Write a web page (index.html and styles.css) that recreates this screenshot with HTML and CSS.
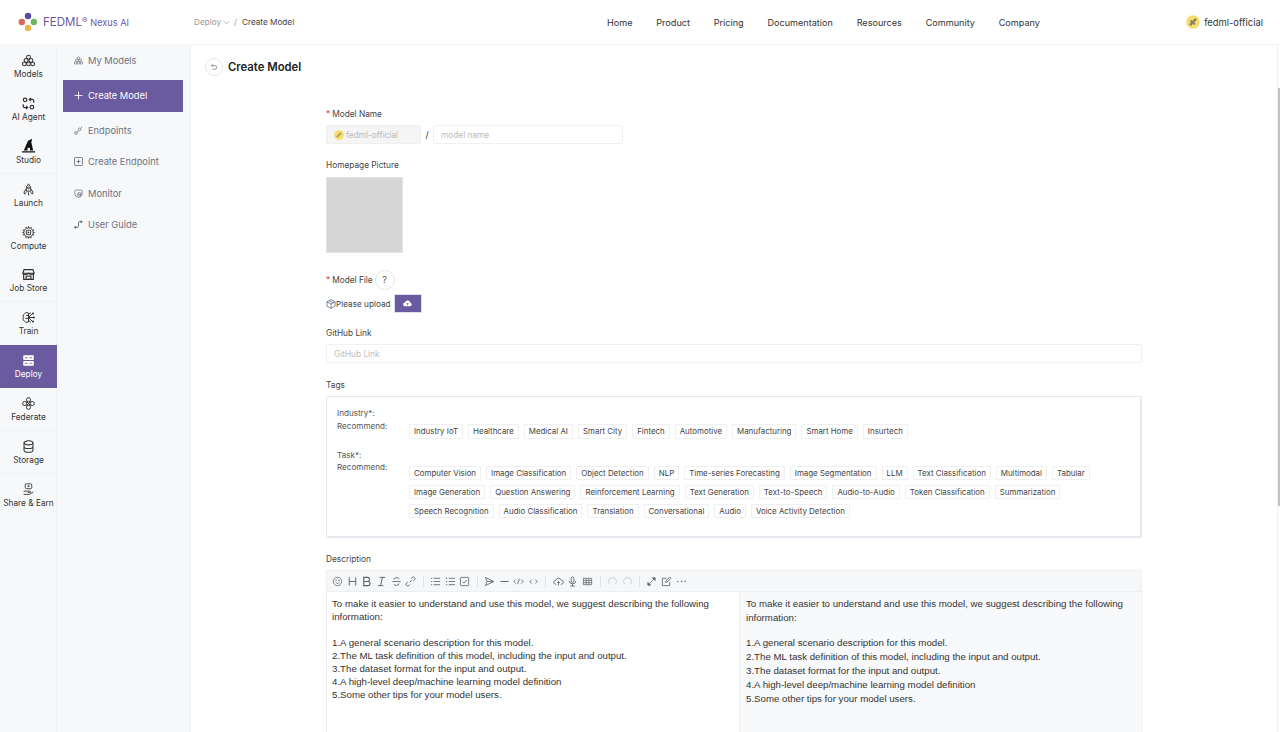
FILE: index.html
```html
<!DOCTYPE html>
<html lang="en">
<head>
  <meta charset="UTF-8">
  <title>Create Model</title>
  <link rel="stylesheet" href="styles.css">
</head>
<body>
  <header class="topbar">
    <div class="logo">
      <svg class="logo-mark" viewBox="0 0 22 20"><circle cx="11" cy="4" r="3.2" fill="#5b4b9f"/><circle cx="4.8" cy="10" r="3.2" fill="#d9695c"/><circle cx="16.8" cy="10" r="3.2" fill="#6db65b"/><circle cx="11" cy="16" r="3.2" fill="#e9b54f"/></svg>
      <span class="logo-name">FEDML<sup>®</sup></span>
      <span class="logo-sub">Nexus AI</span>
    </div>
    <div class="crumbs">
      <span class="crumb-link">Deploy</span>
      <svg class="crumb-arrow" viewBox="0 0 8 8"><path d="M1 2.5 4 5.5 7 2.5" fill="none" stroke="#999" stroke-width=".8"/></svg>
      <span class="crumb-sep">/</span>
      <span class="crumb-now">Create Model</span>
    </div>
    <nav class="topnav">
      <a>Home</a><a>Product</a><a>Pricing</a><a>Documentation</a><a>Resources</a><a>Community</a><a>Company</a>
    </nav>
    <div class="user">
      <svg class="avatar" viewBox="0 0 16 16"><circle cx="8" cy="8" r="7.8" fill="#f8dd6a"/><path d="M3.5 10.5 10.5 3.5 12.5 5.5 5.5 12.5Z" fill="#8a7f6a"/><circle cx="6" cy="7" r="1.1" fill="#5f6a80"/><circle cx="9.5" cy="10" r="1.1" fill="#5f6a80"/></svg>
      <span>fedml-official</span>
    </div>
  </header>

  <div class="layout">
    <!-- first level menu -->
    <aside class="rail">
      <a class="rail-item">
        <svg class="rail-icon" viewBox="0 0 16 16"><g fill="none" stroke="#333" stroke-width="1.3"><circle cx="8" cy="4" r="2.4"/><circle cx="5" cy="8" r="2.4"/><circle cx="11" cy="8" r="2.4"/><circle cx="2.9" cy="12.2" r="2.3"/><circle cx="8" cy="12.2" r="2.3"/><circle cx="13.1" cy="12.2" r="2.3"/></g></svg>
        <span>Models</span>
      </a>
      <a class="rail-item">
        <svg class="rail-icon" viewBox="0 0 16 16"><g fill="none" stroke="#333" stroke-width="1.5"><circle cx="3.8" cy="3.5" r="2.2"/><circle cx="12.2" cy="12.5" r="2.2"/><path d="M11 1 9 3 11 5M9 3H12.500Q14.500 3 14.500 5V7"/><path d="M5 11 7 13 5 15M7 13H3.500Q1.500 13 1.500 11V9"/></g></svg>
        <span>AI Agent</span>
      </a>
      <a class="rail-item rail-sep">
        <svg class="rail-icon rail-icon-large" viewBox="0 0 16 16"><path d="M1 15.500H15V14.200H1ZM3 13.200 7.500 3 12 .8 11 4.500 13 13.200H9.500V10.500H7V13.200Z" fill="#111"/></svg>
        <span>Studio</span>
      </a>
      <a class="rail-item">
        <svg class="rail-icon" viewBox="0 0 16 16"><g fill="none" stroke="#333" stroke-width="1.2"><path d="M8 1Q11.500 4 11 10H5Q4.500 4 8 1Z"/><circle cx="8" cy="6" r="1.2"/><path d="M5 7.500 2.500 11 3 13.500 5.500 11.500M11 7.500 13.500 11 13 13.500 10.500 11.500M8 11.500V15"/></g></svg>
        <span>Launch</span>
      </a>
      <a class="rail-item">
        <svg class="rail-icon" viewBox="0 0 16 16"><g fill="none" stroke="#333" stroke-width="1.2"><circle cx="8" cy="8" r="5.8"/><rect x="5.3" y="5.3" width="5.4" height="5.4" rx="1"/><path d="M8 .5V2.200M5 1V2.800M11 1V2.800M8 13.800V15.500M5 13.200V15M11 13.200V15M.5 8H2.200M1 5H2.800M1 11H2.800M13.800 8H15.500M13.200 5H15M13.200 11H15"/></g><path d="M7 6.500 9.500 8 7 9.500Z" fill="#333"/></svg>
        <span>Compute</span>
      </a>
      <a class="rail-item rail-sep">
        <svg class="rail-icon" viewBox="0 0 16 16"><g fill="none" stroke="#333" stroke-width="1.4"><path d="M2.500 2H13.500L15 6.500H1ZM2 6.500V14H14V6.500"/><path d="M1 6.500Q4.500 9.500 8 6.500Q11.500 9.500 15 6.500"/><rect x="5" y="10" width="6" height="4"/></g></svg>
        <span>Job Store</span>
      </a>
      <a class="rail-item">
        <svg class="rail-icon" viewBox="0 0 16 16"><g fill="none" stroke="#333" stroke-width="1.2"><path d="M8 2.500Q4.500 .8 3 3.500 .5 4.500 1.500 8 .5 11.500 3 12.500 4.500 15.200 8 13.500Z"/><path d="M5 5.500H8M4 9H8M8 8 13 3M8 8H14.500M8 8 13 13M8 4.500 11 2M8 11.500 11 14"/></g><circle cx="13.5" cy="3" r="1.3" fill="#333"/><circle cx="14.5" cy="8" r="1.3" fill="#333"/><circle cx="13.5" cy="13" r="1.3" fill="#333"/></svg>
        <span>Train</span>
      </a>
      <a class="rail-item rail-active">
        <svg class="rail-icon" viewBox="0 0 16 16"><rect x="1.5" y="1.5" width="13" height="6" rx="1" fill="#fff"/><rect x="1.5" y="8.5" width="13" height="6" rx="1" fill="#fff"/><path d="M3.500 4.500H7M9 4.500H12.500M3.500 11.500H7M9 11.500H12.500" stroke="#6a5a9f"/></svg>
        <span>Deploy</span>
      </a>
      <a class="rail-item rail-sep">
        <svg class="rail-icon" viewBox="0 0 16 16"><g fill="none" stroke="#333" stroke-width="1.2"><circle cx="8" cy="3.3" r="2.5"/><circle cx="8" cy="12.7" r="2.5"/><circle cx="3.3" cy="8" r="2.5"/><circle cx="12.7" cy="8" r="2.5"/><path d="M5.500 5.500 10.500 10.500M10.500 5.500 5.500 10.500"/></g></svg>
        <span>Federate</span>
      </a>
      <a class="rail-item rail-sep">
        <svg class="rail-icon" viewBox="0 0 16 16"><g fill="none" stroke="#333" stroke-width="1.3"><ellipse cx="8" cy="3.5" rx="5.5" ry="2.5"/><path d="M2.500 3.500V12.500C2.500 14 5 15 8 15S13.500 14 13.500 12.500V3.500M2.500 8C2.500 9.500 5 10.500 8 10.500S13.500 9.500 13.500 8"/></g></svg>
        <span>Storage</span>
      </a>
      <a class="rail-item">
        <svg class="rail-icon" viewBox="0 0 16 16"><g fill="none" stroke="#444" stroke-width="1.2"><rect x="4" y="1" width="8" height="6" rx="1.5"/><path d="M2 10H9Q11 10 10.500 11.500H7M2 14H9L14 11"/></g><circle cx="8" cy="4" r="1.2" fill="#444"/></svg>
        <span>Share &amp; Earn</span>
      </a>
    </aside>

    <!-- second level menu -->
    <aside class="sidemenu">
      <a class="side-item side-models">
        <svg class="side-icon" viewBox="0 0 16 16"><g fill="none" stroke="#6b7280" stroke-width="1.3"><circle cx="8" cy="4" r="2.4"/><circle cx="5" cy="8" r="2.4"/><circle cx="11" cy="8" r="2.4"/><circle cx="2.9" cy="12.2" r="2.3"/><circle cx="8" cy="12.2" r="2.3"/><circle cx="13.1" cy="12.2" r="2.3"/></g></svg>
        <span>My Models</span>
      </a>
      <a class="side-item side-active">
        <svg class="side-icon" viewBox="0 0 16 16"><path d="M8 1V15M1 8H15" stroke="#fff" stroke-width="1.5"/></svg>
        <span>Create Model</span>
      </a>
      <a class="side-item">
        <svg class="side-icon" viewBox="0 0 16 16"><g fill="none" stroke="#6b7280" stroke-width="1.4"><circle cx="3.5" cy="12.5" r="2.3"/><circle cx="10" cy="6" r="2.3"/><path d="M5.200 10.800 8.300 7.700M12 4 14.500 1.500"/></g></svg>
        <span>Endpoints</span>
      </a>
      <a class="side-item">
        <svg class="side-icon" viewBox="0 0 16 16"><g fill="none" stroke="#555d6b" stroke-width="1.4"><rect x="1" y="1" width="14" height="14" rx="1.5"/><path d="M8 4.500V11.500M4.500 8H11.500"/></g></svg>
        <span>Create Endpoint</span>
      </a>
      <a class="side-item">
        <svg class="side-icon" viewBox="0 0 16 16"><g fill="none" stroke="#6b7280" stroke-width="1.4"><path d="M1.500 3Q4 .5 8 2 12 .5 14.500 3V9Q14 14 8 15 2 14 1.500 9Z"/><circle cx="9.5" cy="9.5" r="3.2"/><path d="M6.300 9.500H12.700"/></g></svg>
        <span>Monitor</span>
      </a>
      <a class="side-item">
        <svg class="side-icon" viewBox="0 0 16 16"><g fill="none" stroke="#555d6b" stroke-width="1.5"><path d="M3 13H6Q8 13 8 11V5Q8 3 10 3H12"/><circle cx="2.5" cy="13" r="1.3" fill="#555d6b"/><circle cx="13" cy="3" r="1.3" fill="#555d6b"/></g></svg>
        <span>User Guide</span>
      </a>
    </aside>

    <main class="content">
      <div class="page-head">
        <button class="back-btn">
          <svg viewBox="0 0 10 10"><path d="M3.500 1.500 1.800 3.200 3.500 4.900M2 3.200H6.500Q8.300 3.200 8.300 5.500T6.500 7.800H3" fill="none" stroke="#666" stroke-width=".8"/></svg>
        </button>
        <h1>Create Model</h1>
      </div>

      <form class="model-form">
        <label class="field-label name-label"><i>*</i>Model Name</label>
        <div class="name-row">
          <div class="owner-box">
            <svg class="owner-avatar" viewBox="0 0 16 16"><circle cx="8" cy="8" r="7.8" fill="#f8dd6a"/><path d="M3.500 10.500 10.500 3.500 12.500 5.500 5.500 12.500Z" fill="#a89c6a"/></svg>
            <span>fedml-official</span>
          </div>
          <span class="slash">/</span>
          <input class="text-input name-input" placeholder="model name">
        </div>

        <label class="field-label picture-label">Homepage Picture</label>
        <div class="picture"></div>

        <div class="file-head">
          <label class="field-label"><i>*</i>Model File</label>
          <span class="help">?</span>
        </div>
        <div class="upload-row">
          <svg class="box-icon" viewBox="0 0 16 16"><g fill="none" stroke="#5a6478" stroke-width="1.2"><path d="M8 1 14.500 4.500V11.500L8 15 1.500 11.500V4.500Z"/><path d="M1.500 4.500 8 8 14.500 4.500M8 8V15M5 2.700 11.500 6.200"/></g></svg>
          <span>Please upload</span>
          <button type="button" class="upload-btn">
            <svg viewBox="0 0 16 12"><path d="M4 11H12.500A3.300 3.300 0 0 0 13 4.500 5 5 0 0 0 3.500 4 3.500 3.500 0 0 0 4 11Z" fill="#fff"/><path d="M8 9.500V5.500M6 7 8 5 10 7" fill="none" stroke="#6a5a9f" stroke-width="1.2"/></svg>
          </button>
        </div>

        <label class="field-label github-label">GitHub Link</label>
        <input class="text-input github-input" placeholder="GitHub Link">

        <label class="field-label tags-label">Tags</label>
        <div class="tags-box">
          <div class="tag-group">
            <div class="tag-title">Industry*:</div>
            <div class="tag-recommend">Recommend:</div>
            <div class="tag-list">
              <span class="tag">Industry IoT</span><span class="tag">Healthcare</span><span class="tag">Medical AI</span><span class="tag">Smart City</span><span class="tag">Fintech</span><span class="tag">Automotive</span><span class="tag">Manufacturing</span><span class="tag">Smart Home</span><span class="tag">Insurtech</span>
            </div>
          </div>
          <div class="tag-group">
            <div class="tag-title">Task*:</div>
            <div class="tag-recommend">Recommend:</div>
            <div class="tag-list">
              <span class="tag">Computer Vision</span><span class="tag">Image Classification</span><span class="tag">Object Detection</span><span class="tag">NLP</span><span class="tag">Time-series Forecasting</span><span class="tag">Image Segmentation</span><span class="tag">LLM</span><span class="tag">Text Classification</span><span class="tag">Multimodal</span><span class="tag">Tabular</span><span class="tag">Image Generation</span><span class="tag">Question Answering</span><span class="tag">Reinforcement Learning</span><span class="tag">Text Generation</span><span class="tag">Text-to-Speech</span><span class="tag">Audio-to-Audio</span><span class="tag">Token Classification</span><span class="tag">Summarization</span><span class="tag">Speech Recognition</span><span class="tag">Audio Classification</span><span class="tag">Translation</span><span class="tag">Conversational</span><span class="tag">Audio</span><span class="tag">Voice Activity Detection</span>
            </div>
          </div>
        </div>

        <label class="field-label desc-label">Description</label>
        <div class="editor">
          <div class="toolbar">
            <button type="button"><svg viewBox="0 0 12 12"><g fill="none" stroke="#586069" stroke-width=".8"><circle cx="6" cy="6" r="4.6"/><path d="M3.800 7Q6 9.500 8.200 7"/></g><circle cx="4.4" cy="4.8" r=".7" fill="#586069"/><circle cx="7.6" cy="4.8" r=".7" fill="#586069"/></svg></button>
            <button type="button"><svg viewBox="0 0 12 12"><path d="M2.500 1.500V10.500M9.500 1.500V10.500M2.500 6H9.500" fill="none" stroke="#586069"/></svg></button>
            <button type="button"><svg viewBox="0 0 12 12"><path d="M3 1.500H7Q9.200 1.500 9.200 3.700T7 6H3ZM3 6H7.500Q9.800 6 9.800 8.200T7.500 10.500H3Z" fill="none" stroke="#586069" stroke-width="1.2"/></svg></button>
            <button type="button"><svg viewBox="0 0 12 12"><path d="M4 1.500H10M2 10.500H8M7 1.500 5 10.500" fill="none" stroke="#586069"/></svg></button>
            <button type="button"><svg viewBox="0 0 12 12"><path d="M1.500 6H10.500M9 3Q8 1.800 6 1.800 3.300 1.800 3.300 4M3 9Q4 10.200 6 10.200 8.700 10.200 8.700 8" fill="none" stroke="#586069" stroke-width=".9"/></svg></button>
            <button type="button"><svg viewBox="0 0 12 12"><path d="M5 7 7.500 4.500M6.500 2.800 7.800 1.600Q9.200.6 10.400 1.800T10.200 4.400L8.800 5.600M5.400 9.200 4.200 10.400Q2.800 11.400 1.600 10.200T1.800 7.600L3.200 6.400" fill="none" stroke="#586069" stroke-width=".9"/></svg></button>
            <span class="tool-sep"></span>
            <button type="button"><svg viewBox="0 0 12 12"><path d="M4 2.500H11M4 6H11M4 9.500H11M1 2.500H2.500M1 6H2.500M1 9.500H2.500" fill="none" stroke="#586069" stroke-width=".9"/></svg></button>
            <button type="button"><svg viewBox="0 0 12 12"><path d="M4 2.500H11M4 6H11M4 9.500H11M1.500 1.500V3.500M1 6H2.500M1 9.500H2.500" fill="none" stroke="#586069" stroke-width=".9"/></svg></button>
            <button type="button"><svg viewBox="0 0 12 12"><rect x="1.5" y="1.5" width="9" height="9" rx="1" fill="none" stroke="#586069" stroke-width=".9"/><path d="M3.500 6 5.300 7.800 8.500 4.200" fill="none" stroke="#586069" stroke-width=".9"/></svg></button>
            <span class="tool-sep"></span>
            <button type="button"><svg viewBox="0 0 12 12"><path d="M1.500 1.500 10.500 6 1.500 10.500 3.500 6ZM3.500 6H10.500" fill="none" stroke="#586069" stroke-width=".9"/></svg></button>
            <button type="button"><svg viewBox="0 0 12 12"><path d="M1.500 6H10.500" stroke="#586069"/></svg></button>
            <button type="button"><svg viewBox="0 0 12 12"><path d="M3 3.800 1 6 3 8.200M9 3.800 11 6 9 8.200M7 3 5 9" fill="none" stroke="#586069" stroke-width=".9"/></svg></button>
            <button type="button"><svg viewBox="0 0 12 12"><path d="M4 3.800 2 6 4 8.200M8 3.800 10 6 8 8.200" fill="none" stroke="#586069" stroke-width=".9"/></svg></button>
            <span class="tool-sep"></span>
            <button type="button"><svg viewBox="0 0 12 12"><path d="M3.500 9H3A2.200 2.200 0 0 1 3 4.600 3.200 3.200 0 0 1 9 4.600 2.200 2.200 0 0 1 9 9H8.500M6 10.500V6M4.500 7.500 6 6 7.500 7.500" fill="none" stroke="#586069" stroke-width=".9"/></svg></button>
            <button type="button"><svg viewBox="0 0 12 12"><rect x="4.5" y="1" width="3" height="6" rx="1.5" fill="none" stroke="#586069" stroke-width=".9"/><path d="M2.500 5.500Q2.500 8.500 6 8.500T9.500 5.500M6 8.500V11M3.500 11H8.500" fill="none" stroke="#586069" stroke-width=".9"/></svg></button>
            <button type="button"><svg viewBox="0 0 12 12"><path d="M1.500 2.500H10.500V9.500H1.500ZM1.500 4.800H10.500M1.500 7.200H10.500M4.500 2.500V9.500M7.500 2.500V9.500" fill="none" stroke="#586069" stroke-width=".8"/></svg></button>
            <span class="tool-sep"></span>
            <button type="button"><svg viewBox="0 0 12 12"><path d="M3 9A4.300 4.300 0 1 1 9 9" fill="none" stroke="#c4c7cc" stroke-width=".9"/></svg></button>
            <button type="button"><svg viewBox="0 0 12 12"><path d="M3 9A4.300 4.300 0 1 1 9 9" fill="none" stroke="#c4c7cc" stroke-width=".9"/></svg></button>
            <span class="tool-sep"></span>
            <button type="button"><svg viewBox="0 0 12 12"><path d="M7 2H10V5ZM5 10H2V7ZM8.500 3.500 3.500 8.500" fill="#586069" stroke="#586069" stroke-width=".8"/></svg></button>
            <button type="button"><svg viewBox="0 0 12 12"><path d="M9.500 7V10.500H1.500V2.500H6M5 7 5.500 5 9.500 1.200 10.800 2.500 7 6.500Z" fill="none" stroke="#586069" stroke-width=".9"/></svg></button>
            <button type="button"><svg viewBox="0 0 12 12"><circle cx="2" cy="6" r=".8" fill="#586069"/><circle cx="6" cy="6" r=".8" fill="#586069"/><circle cx="10" cy="6" r=".8" fill="#586069"/></svg></button>
          </div>
          <div class="panes">
            <div class="pane-edit">To make it easier to understand and use this model, we suggest describing the following information:

1.A general scenario description for this model.
2.The ML task definition of this model, including the input and output.
3.The dataset format for the input and output.
4.A high-level deep/machine learning model definition
5.Some other tips for your model users.</div>
            <div class="pane-preview">
              <p>To make it easier to understand and use this model, we suggest describing the following information:</p>
              <p>1.A general scenario description for this model.<br>2.The ML task definition of this model, including the input and output.<br>3.The dataset format for the input and output.<br>4.A high-level deep/machine learning model definition<br>5.Some other tips for your model users.</p>
            </div>
          </div>
        </div>
      </form>
      <div class="scroll-track"><div class="scroll-thumb"></div></div>
    </main>
  </div>
</body>
</html>
```

FILE: styles.css
```css
* {
  box-sizing: border-box;
}

html, body {
  height: 100%;
}

body {
  margin: 0;
  overflow: hidden;
  background-color: #fff;
  color: #333;
  font-family: Inter, "Liberation Sans", sans-serif;
  font-size: 9px;
}

/* top bar */
.topbar {
  display: flex;
  align-items: center;
  height: 45px;
  border-bottom: 1px solid #f5f5f6;
}

.logo {
  display: flex;
  align-items: center;
  width: 194px;
  padding-left: 17px;
  color: #6a5a9f;
}

.logo-mark {
  width: 22px;
  height: 20px;
  margin-right: 4px;
}

.logo-name {
  font-size: 11.5px;
}

.logo-name sup {
  font-size: 8px;
  line-height: 0;
  vertical-align: 3px;
}

.logo-sub {
  margin-left: 3px;
  font-size: 9.2px;
}

.crumbs {
  display: flex;
  align-items: center;
  width: 400px;
  color: #999;
  font-size: 8.2px;
}

.crumb-arrow {
  width: 7px;
  height: 7px;
  margin-left: 2px;
}

.crumb-sep {
  margin: 0 5px 0 4px;
}

.crumb-now {
  color: #444;
}

.topnav {
  display: flex;
  gap: 23.8px;
  margin-left: 13px;
  font-size: 9.1px;
  color: #333;
}

.user {
  display: flex;
  align-items: center;
  gap: 4px;
  margin-left: auto;
  padding-right: 17px;
  font-size: 9.4px;
  color: #333;
}

.avatar {
  width: 14px;
  height: 14px;
}

/* left menus */
.layout {
  display: flex;
  height: calc(100vh - 45px);
}

.rail {
  flex: none;
  width: 57px;
  background-color: #f7f8fa;
  border-right: 1px solid #f0f1f3;
}

.rail-item {
  display: flex;
  flex-direction: column;
  align-items: center;
  width: 57px;
  height: 42.9px;
  padding-top: 9px;
  color: #333;
  font-size: 8.3px;
  line-height: 12px;
  white-space: nowrap;
}

.rail-icon {
  flex: none;
  width: 13px;
  height: 13px;
  margin-bottom: 1px;
}

.rail-icon-large {
  width: 15px;
  height: 15px;
  margin-top: -2px;
}

.rail-sep {
  border-bottom: 1px solid #f0f1f3;
}

.rail-active {
  background-color: #6a5a9f;
  color: #fff;
}

.sidemenu {
  flex: none;
  display: flex;
  flex-direction: column;
  width: 134px;
  padding: 0 6px;
  background-color: #f7f8fa;
  border-right: 1px solid #f0f1f3;
  color: #6b7280;
  font-size: 9.3px;
}

.side-item {
  display: flex;
  align-items: center;
  gap: 5px;
  width: 120px;
  height: 31.5px;
  padding-left: 11px;
}

.side-models {
  height: 31px;
  margin-bottom: 4px;
}

.side-active {
  margin-bottom: 3px;
  background-color: #6a5a9f;
  color: #fff;
}

.side-icon {
  width: 9px;
  height: 9px;
}

/* main area */
.content {
  position: relative;
  flex: 1;
  min-width: 0;
  overflow: hidden;
}

.page-head {
  display: flex;
  align-items: center;
  gap: 5px;
  height: 18px;
  margin: 13px 0 0 14px;
}

.page-head h1 {
  margin: 0;
  color: #222;
  font-size: 11.3px;
  font-weight: 600;
}

.back-btn {
  display: flex;
  align-items: center;
  justify-content: center;
  width: 18px;
  height: 18px;
  padding: 0;
  background-color: #fff;
  border: 1px solid #e8e8e8;
  border-radius: 50%;
}

.back-btn svg {
  width: 8px;
  height: 8px;
}

.model-form {
  display: flex;
  flex-direction: column;
  align-items: flex-start;
  width: 816px;
  margin-left: 135px;
}

.field-label {
  display: block;
  color: #444;
  font-size: 8.3px;
  line-height: 12px;
}

.field-label i {
  margin-right: 2px;
  color: #e23c3c;
  font-style: normal;
}

.name-label {
  margin-top: 32px;
}

.name-row {
  display: flex;
  align-items: center;
  margin-top: 5px;
}

.owner-box {
  display: flex;
  align-items: center;
  gap: 2px;
  width: 95px;
  height: 19px;
  padding-left: 7px;
  background-color: #f5f5f5;
  border: 1px solid #efefef;
  border-radius: 2px;
  color: #bbb;
  font-size: 8.3px;
}

.owner-avatar {
  width: 10px;
  height: 10px;
}

.slash {
  width: 12px;
  color: #333;
  text-align: center;
}

.text-input {
  height: 19px;
  padding: 0 7px;
  background-color: #fff;
  border: 1px solid #f0f0f0;
  border-radius: 2px;
  font-family: inherit;
  font-size: 8.3px;
}

.text-input::placeholder {
  color: #bdbdbd;
}

.name-input {
  width: 190px;
}

.picture-label {
  margin-top: 15px;
}

.picture {
  width: 77px;
  height: 76px;
  margin-top: 6px;
  background-color: #d6d6d6;
  border: 1px solid #e2e2e2;
}

.file-head {
  display: flex;
  align-items: center;
  gap: 2px;
  height: 20px;
  margin-top: 17px;
}

.help {
  width: 20px;
  height: 20px;
  border: 1px solid #e5e5e5;
  border-radius: 50%;
  color: #555;
  line-height: 18px;
  text-align: center;
}

.upload-row {
  display: flex;
  align-items: center;
  height: 19px;
  margin-top: 4px;
  color: #444;
  font-size: 8.2px;
}

.box-icon {
  width: 10px;
  height: 10px;
}

.upload-btn {
  display: flex;
  align-items: center;
  justify-content: center;
  width: 28px;
  height: 19px;
  margin-left: 3px;
  padding: 0;
  background-color: #6a5a9f;
  border: 1px solid #e0ddec;
}

.upload-btn svg {
  width: 9px;
  height: 7px;
}

.github-label {
  margin-top: 14px;
}

.github-input {
  width: 816px;
  margin-top: 5px;
}

.tags-label {
  margin-top: 16px;
}

.tags-box {
  width: 816px;
  height: 142px;
  margin-top: 5px;
  padding: 10px 10px 0;
  border: 2px solid #e8e8f0;
  border-width: 1px 2px 2px 1px;
  border-radius: 2px;
  color: #555;
  font-size: 8.1px;
}

.tag-group {
  display: grid;
  grid-template-columns: 72px 1fr;
  grid-template-rows: 12.5px auto;
  margin-bottom: 10px;
  line-height: 13px;
}

.tag-title {
  grid-column: 1 / 3;
}

.tag-list {
  display: flex;
  flex-wrap: wrap;
  gap: 4.5px 5px;
  margin-top: 4.5px;
}

.tag {
  height: 14.5px;
  padding: 0 4px;
  border: 1px solid #f0f0f0;
  border-radius: 1px;
  color: #444;
  font-size: 7.9px;
  line-height: 13px;
  white-space: nowrap;
}

.desc-label {
  margin-top: 15px;
}

.editor {
  width: 816px;
  margin-top: 5px;
  border: 1px solid #efeff1;
}

.toolbar {
  display: flex;
  align-items: center;
  height: 21px;
  padding-left: 3px;
  background-color: #f6f7f8;
  border-bottom: 1px solid #eeeef0;
}

.toolbar button {
  display: flex;
  align-items: center;
  justify-content: center;
  width: 14.7px;
  height: 14px;
  padding: 0;
  background: none;
  border: 0;
}

.toolbar svg {
  width: 11px;
  height: 11px;
}

.tool-sep {
  width: 1px;
  height: 11px;
  margin: 0 4.5px;
  background-color: #dfe1e4;
}

.panes {
  display: flex;
  height: 300px;
  color: #333;
  font-family: "Liberation Sans", sans-serif;
  font-size: 9.7px;
}

.pane-edit {
  width: 413px;
  padding: 5px 6px 6px 5px;
  line-height: 13px;
  white-space: pre-wrap;
  border-right: 1px solid #efeff1;
}

.pane-preview {
  flex: 1;
  padding: 5px 6px;
  background-color: #f8f9fb;
  line-height: 14px;
}

.pane-preview p {
  margin: 0 0 11px;
}

.scroll-track {
  position: absolute;
  top: 0;
  right: 0;
  bottom: 0;
  width: 3px;
  border-left: 1px solid #f1f1f1;
}

.scroll-thumb {
  width: 2px;
  height: 418px;
  margin-top: 43px;
  background-color: #c1c1c1;
}
```
